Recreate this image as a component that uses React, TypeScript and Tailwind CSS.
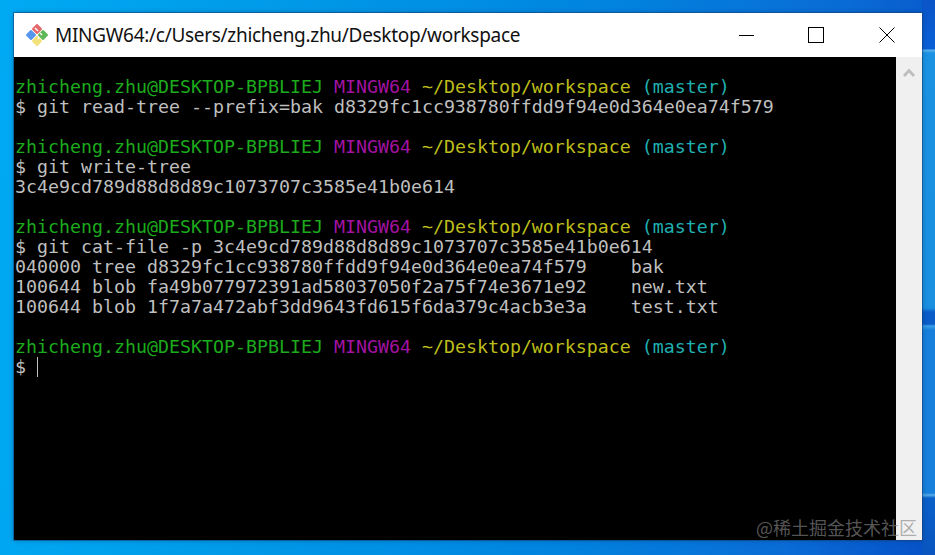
const PROMPT_LINE = (
  <>
    <span className="text-[#1cab1c]">zhicheng.zhu@DESKTOP-BPBLIEJ</span>{" "}
    <span className="text-[#a212a2]">MINGW64</span>{" "}
    <span className="text-[#bdbd1a]">~/Desktop/workspace</span>{" "}
    <span className="text-[#1fb0b0]">(master)</span>
  </>
);

const lines: string[] = [
  "",
  "prompt",
  "$ git read-tree --prefix=bak d8329fc1cc938780ffdd9f94e0d364e0ea74f579",
  "",
  "prompt",
  "$ git write-tree",
  "3c4e9cd789d88d8d89c1073707c3585e41b0e614",
  "",
  "prompt",
  "$ git cat-file -p 3c4e9cd789d88d8d89c1073707c3585e41b0e614",
  "040000 tree d8329fc1cc938780ffdd9f94e0d364e0ea74f579    bak",
  "100644 blob fa49b077972391ad58037050f2a75f74e3671e92    new.txt",
  "100644 blob 1f7a7a472abf3dd9643fd615f6da379c4acb3e3a    test.txt",
  "",
  "prompt",
];

function GitLogo() {
  return (
    <svg width="24" height="24" viewBox="0 0 24 24">
      <rect x="2.2" y="8.2" width="7.6" height="7.6" rx="1" transform="rotate(45 6 12)" fill="#5596ee" />
      <rect x="8.2" y="2.2" width="7.6" height="7.6" rx="1" transform="rotate(45 12 6)" fill="#e2686a" />
      <rect x="14.2" y="8.2" width="7.6" height="7.6" rx="1" transform="rotate(45 18 12)" fill="#5fb858" />
      <rect x="8.2" y="14.2" width="7.6" height="7.6" rx="1" transform="rotate(45 12 18)" fill="#f3e27a" />
      <path d="M10 5 L13 8 M15 10 L17 12 M14 14 L13 16" stroke="#fff" strokeWidth="1.4" fill="none" />
    </svg>
  );
}

export default function App() {
  return (
    <div className="relative w-[935px] h-[555px] overflow-hidden pt-[13px] pl-[14px] bg-[linear-gradient(96deg,#00aaf3_0%,#0096e6_35%,#0085e0_60%,#0a6cd6_85%,#0650c6_100%)]">
      {/* wallpaper streaks at the right edge */}
      <div className="absolute right-0 top-0 w-[13px] h-full bg-[linear-gradient(180deg,#0a55c8_0,#0a60d6_49px,#5db4ec_50px,#1c93e2_53px,#1a8fe0_308px,#0a5cc8_312px,#0a5cc8_324px,#3b9fe6_326px,#1680dc_330px,#1680dc_493px,#59ace8_495px,#0a60c8_498px,#0a55c0_100%)]" />
      <div className="relative w-[908px] h-[527px] flex flex-col bg-white shadow-[0_0_0_1px_rgba(20,70,120,0.55),0_0_5px_rgba(0,40,90,0.45)]">
        {/* title bar */}
        <div className="h-[44px] flex items-center bg-white pl-[11px]">
          <GitLogo />
          <span className="ml-[6px] text-[19px] tracking-[-0.3px] text-[#111] font-['Noto_Sans',sans-serif]">
            MINGW64:/c/Users/zhicheng.zhu/Desktop/workspace
          </span>
          <div className="ml-auto flex items-center h-full">
            <div className="w-[15px] h-px bg-black" />
            <div className="ml-[54px] w-[16px] h-[16px] border border-black" />
            <svg className="ml-[55px] mr-[27px]" width="16" height="16" viewBox="0 0 16 16">
              <path d="M0.5 0.5 L15.5 15.5 M15.5 0.5 L0.5 15.5" stroke="#000" strokeWidth="1" fill="none" />
            </svg>
          </div>
        </div>
        {/* terminal */}
        <div className="flex flex-1 min-h-0">
          <div className="flex-1 bg-black pl-px font-['DejaVu_Sans_Mono',monospace] text-[18.27px] leading-[20px] text-[#bfbfbf] whitespace-pre">
            {lines.map((line, i) => (
              <div key={i} className="h-[20px]">
                {line === "prompt" ? PROMPT_LINE : line}
              </div>
            ))}
            <div className="h-[20px] flex">
              <span>$ </span>
              <span className="w-px h-[20px] bg-[#bfbfbf]" />
            </div>
          </div>
          {/* scrollbar */}
          <div className="w-[26px] bg-[#f0f0f0] flex justify-center pt-[11px]">
            <svg width="12" height="9" viewBox="0 0 12 9">
              <path d="M1 8 L6 2.5 L11 8" stroke="#bdbdbd" strokeWidth="2.8" fill="none" />
            </svg>
          </div>
        </div>
      </div>
      {/* watermark */}
      <span className="absolute left-[756px] top-[516px] text-[18px] leading-[22px] text-[#878787]/65 font-['Noto_Sans_CJK_SC',sans-serif] whitespace-pre">
        @稀土掘金技术社区
      </span>
    </div>
  );
}
